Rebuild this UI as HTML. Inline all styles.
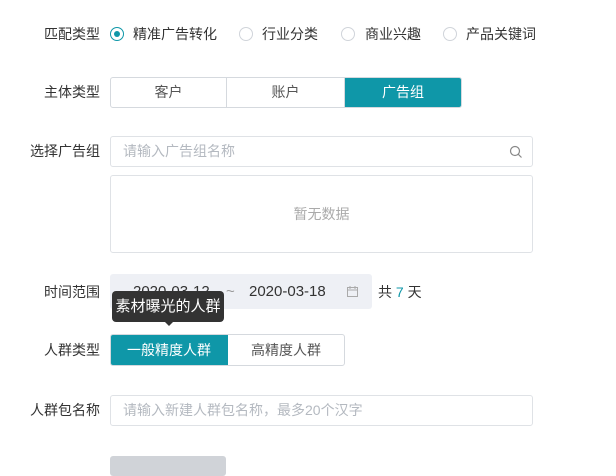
<!DOCTYPE html>
<html><head><meta charset="utf-8"><style>
*{box-sizing:border-box;margin:0;padding:0}
body{width:616px;height:463px;overflow:hidden;background:#fff;font-family:"Liberation Sans","Noto Sans CJK SC",sans-serif;font-size:14px;color:#333;position:relative}
.a{position:absolute}
.lbl{position:absolute;right:516px;color:#333;white-space:nowrap;line-height:20px}
.radio{position:absolute;top:27px;width:14px;height:14px;border:1px solid #d0d4da;border-radius:50%}
.rt{position:absolute;top:24px;line-height:20px;color:#333}
.seg{position:absolute;border:1px solid #d5d9de;border-radius:3px;display:flex;overflow:hidden}
.seg div{flex:none;text-align:center;color:#555;border-right:1px solid #d5d9de}
.seg div:last-child{border-right:none}
.seg .on{background:#0f97a8;color:#fff;border-color:#0f97a8}
.inp{position:absolute;border:1px solid #dfe2e6;border-radius:3px;color:#b4b9c0;padding-left:12px}
</style></head><body>
<div class="lbl" style="top:24px">匹配类型</div>
<div class="radio" style="left:110px;border-color:#0f97a8"><div style="position:absolute;left:3px;top:3px;width:6px;height:6px;border-radius:50%;background:#0f97a8"></div></div>
<div class="rt" style="left:133px">精准广告转化</div>
<div class="radio" style="left:239px"></div><div class="rt" style="left:262px">行业分类</div>
<div class="radio" style="left:341px"></div><div class="rt" style="left:365px">商业兴趣</div>
<div class="radio" style="left:443px"></div><div class="rt" style="left:466px">产品关键词</div>

<div class="lbl" style="top:82px">主体类型</div>
<div class="seg" style="left:110px;top:77px;width:352px;height:31px;line-height:29px">
<div style="width:116px">客户</div><div style="width:118px">账户</div><div class="on" style="width:116px">广告组</div></div>

<div class="lbl" style="top:141px">选择广告组</div>
<div class="inp" style="left:110px;top:136px;width:423px;height:31px;line-height:29px">请输入广告组名称
<svg class="a" style="left:398px;top:8px" width="14" height="14" viewBox="0 0 14 14" fill="none" stroke="#888" stroke-width="1.2"><circle cx="6" cy="6" r="4.5"/><path d="M9.3 9.3L12.5 12.5"/></svg></div>
<div class="inp" style="left:110px;top:175px;width:423px;height:78px;line-height:76px;text-align:center;padding:0;color:#aaa">暂无数据</div>

<div class="lbl" style="top:282px">时间范围</div>
<div class="a" style="left:110px;top:274px;width:262px;height:35px;background:#eef0f5;border-radius:3px;line-height:35px;color:#333;font-size:15px">
<span class="a" style="left:23px">2020-03-12</span><span class="a" style="left:116px;color:#999">~</span><span class="a" style="left:139px">2020-03-18</span>
<svg class="a" style="left:236px;top:11px" width="13" height="13" viewBox="0 0 13 13" fill="none" stroke="#aaa" stroke-width="1"><rect x="1.5" y="2.5" width="10" height="9"/><path d="M1.5 5h10M4 1v3M9 1v3"/></svg></div>
<div class="a" style="left:378px;top:282px;line-height:20px;color:#333">共 <span style="color:#0f97a8">7</span> 天</div>
<div class="a" style="left:112px;top:291px;width:112px;height:31px;background:#333;border-radius:4px;color:#fff;line-height:31px;text-align:center;font-size:15px">素材曝光的人群</div>
<div class="a" style="left:164px;top:321px;width:0;height:0;border-left:5px solid transparent;border-right:5px solid transparent;border-top:5px solid #333"></div>

<div class="lbl" style="top:340px">人群类型</div>
<div class="seg" style="left:110px;top:334px;width:235px;height:32px;line-height:30px">
<div class="on" style="width:117px">一般精度人群</div><div style="width:116px">高精度人群</div></div>

<div class="lbl" style="top:400px">人群包名称</div>
<div class="inp" style="left:110px;top:395px;width:423px;height:31px;line-height:29px">请输入新建人群包名称，最多20个汉字</div>

<div class="a" style="left:110px;top:456px;width:116px;height:20px;background:#d0d3d8;border-radius:3px"></div>
</body></html>
